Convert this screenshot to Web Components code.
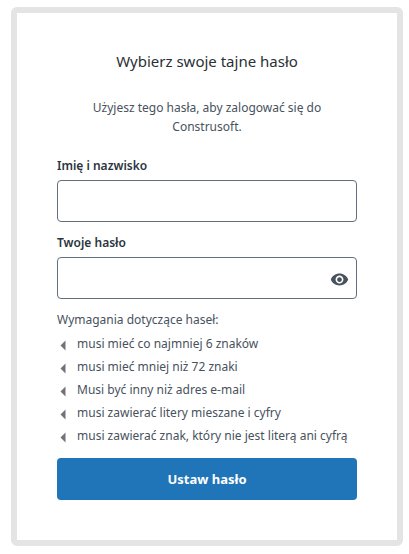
<!DOCTYPE html>
<html lang="pl">
<head>
<meta charset="utf-8">
<meta name="viewport" content="width=device-width, initial-scale=1">
<title>Wybierz swoje tajne hasło</title>
<style>
  body{
    margin:0;
    padding:7px 6px 8px 11px;
    background-color:#fff;
    color:#47525d;
    font:12px/19px "Noto Sans", "Open Sans", sans-serif;
  }
</style>
</head>
<body>
<password-card heading="Wybierz swoje tajne hasło">
  <span slot="intro">Użyjesz tego hasła, aby zalogować się do Construsoft.</span>
  <form-field label="Imię i nazwisko" type="text"></form-field>
  <form-field label="Twoje hasło" type="password"></form-field>
  <password-rules heading="Wymagania dotyczące haseł:">
    <password-rule>musi mieć co najmniej 6 znaków</password-rule>
    <password-rule>musi mieć mniej niż 72 znaki</password-rule>
    <password-rule>Musi być inny niż adres e-mail</password-rule>
    <password-rule>musi zawierać litery mieszane i cyfry</password-rule>
    <password-rule>musi zawierać znak, który nie jest literą ani cyfrą</password-rule>
  </password-rules>
  <submit-button>Ustaw hasło</submit-button>
</password-card>

<script>
(function(w, doc) {
  'use strict';

  function makeTemplate(html) {
    const template = doc.createElement('template');
    template.innerHTML = html;
    return template;
  }

  class BaseElement extends HTMLElement {
    constructor() {
      super();
      this.attachShadow({ mode: 'open' });
      this.shadowRoot.appendChild(this.constructor.template.content.cloneNode(true));
    }
  }

  class PasswordCard extends BaseElement {
    static template = makeTemplate(`
      <style>
        :host{
          display:block;
          padding:40px;
          border:6px solid #e4e4e4;
          border-radius:6px;
          background-color:#fff;
        }
        h1{
          margin:0 0 29px;
          color:#2a2f36;
          font-size:15px;
          font-weight:400;
          line-height:16px;
          text-align:center;
        }
        p{
          margin:0 0 20px;
          text-align:center;
        }
        .fields{
          display:flex;
          flex-direction:column;
          gap:11px;
        }
      </style>
      <h1></h1>
      <p><slot name="intro"></slot></p>
      <div class="fields"><slot></slot></div>
    `);

    connectedCallback() {
      this.shadowRoot.querySelector('h1').textContent = this.getAttribute('heading');
    }
  }

  class FormField extends BaseElement {
    static template = makeTemplate(`
      <style>
        :host{
          display:flex;
          flex-direction:column;
          gap:4px;
        }
        label{
          color:#2b3540;
          font-weight:600;
          line-height:20px;
        }
        .box{
          display:flex;
          align-items:center;
          box-sizing:border-box;
          height:42px;
          border:1px solid #626f7e;
          border-radius:4px;
          background-color:#fff;
        }
        .box:focus-within{
          border-color:#2074b8;
        }
        input{
          flex:1;
          min-width:0;
          height:100%;
          box-sizing:border-box;
          padding:0 12px;
          border:0;
          outline:0;
          background:none;
          color:inherit;
          font:inherit;
        }
        button{
          display:flex;
          padding:2px 0 0;
          margin-right:7px;
          border:0;
          background:none;
          color:#47525d;
          cursor:pointer;
        }
        button[hidden]{
          display:none;
        }
      </style>
      <label for="field"></label>
      <div class="box">
        <input id="field">
        <button type="button" aria-label="Pokaż hasło" hidden>
          <svg width="19" height="19" viewBox="0 0 24 24" fill="currentColor" aria-hidden="true">
            <path d="M12 4.5C7 4.5 2.73 7.61 1 12c1.73 4.39 6 7.5 11 7.5s9.27-3.11 11-7.5c-1.73-4.39-6-7.5-11-7.5zM12 17c-2.76 0-5-2.24-5-5s2.24-5 5-5 5 2.24 5 5-2.24 5-5 5zm0-8c-1.66 0-3 1.34-3 3s1.34 3 3 3 3-1.34 3-3-1.34-3-3-3z"/>
          </svg>
        </button>
      </div>
    `);

    connectedCallback() {
      const input = this.shadowRoot.querySelector('input');
      const toggle = this.shadowRoot.querySelector('button');
      this.shadowRoot.querySelector('label').textContent = this.getAttribute('label');
      input.type = this.getAttribute('type') || 'text';

      if (input.type === 'password') {
        toggle.hidden = false;
        toggle.onclick = () => {
          input.type = input.type === 'password' ? 'text' : 'password';
        };
      }
    }
  }

  class PasswordRules extends BaseElement {
    static template = makeTemplate(`
      <style>
        :host{
          display:block;
        }
        p{
          margin:0 0 2px;
          line-height:20px;
        }
      </style>
      <p></p>
      <div role="list"><slot></slot></div>
    `);

    connectedCallback() {
      this.shadowRoot.querySelector('p').textContent = this.getAttribute('heading');
    }
  }

  class PasswordRule extends BaseElement {
    static template = makeTemplate(`
      <style>
        :host{
          display:flex;
          line-height:23px;
        }
        svg{
          flex:none;
          width:20px;
          height:23px;
        }
      </style>
      <svg viewBox="0 0 20 23" fill="#75707a" aria-hidden="true"><path d="M8.500 8.500v10L3.500 13.500z"/></svg>
      <span><slot></slot></span>
    `);

    connectedCallback() {
      this.setAttribute('role', 'listitem');
    }
  }

  class SubmitButton extends BaseElement {
    static template = makeTemplate(`
      <style>
        :host{
          display:block;
        }
        button{
          display:block;
          width:100%;
          height:42px;
          padding:0 16px;
          border:0;
          border-radius:4px;
          background-color:#2074b8;
          color:#fff;
          font:inherit;
          font-size:13px;
          font-weight:700;
          cursor:pointer;
        }
      </style>
      <button type="button"><slot></slot></button>
    `);
  }

  w.customElements.define('password-card', PasswordCard);
  w.customElements.define('form-field', FormField);
  w.customElements.define('password-rules', PasswordRules);
  w.customElements.define('password-rule', PasswordRule);
  w.customElements.define('submit-button', SubmitButton);

})(window, document);
</script>
</body>
</html>
